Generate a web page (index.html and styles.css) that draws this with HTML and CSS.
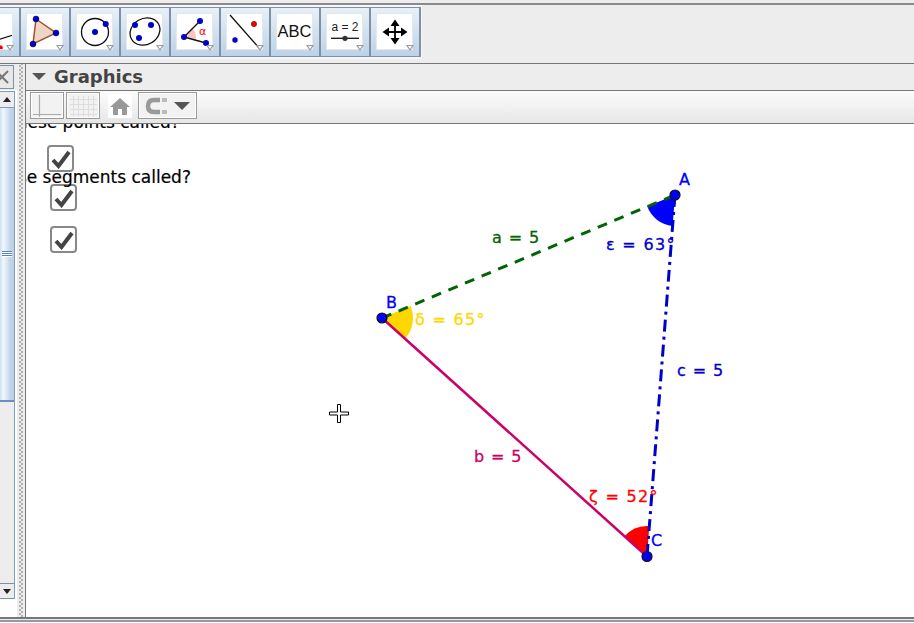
FILE: index.html
```html
<!DOCTYPE html>
<html lang="en">
<head>
<meta charset="utf-8">
<title>Graphics</title>
<link rel="stylesheet" href="styles.css">
</head>
<body>
<header class="topband">
  <div class="toolbar">
    <button class="tool"><span class="face"><svg width="35" height="35" viewBox="0 0 35 35"><path d="M20 26 L36 21" class="ln"/><circle cx="23" cy="34" r="2.800" fill="#f00"/></svg></span><i class="tri"></i></button>
    <button class="tool"><span class="face"><svg width="35" height="35" viewBox="0 0 35 35"><path d="M9 5 L29 19 L6 30Z" fill="#ecd6c8" stroke="#a5502a" stroke-width="1.500"/><circle cx="9" cy="5" r="3" fill="#00c" stroke="#112" stroke-width=".5"/><circle cx="29" cy="19" r="3" fill="#00c" stroke="#112" stroke-width=".5"/><circle cx="6" cy="30" r="3" fill="#00c" stroke="#112" stroke-width=".5"/></svg></span><i class="tri"></i></button>
    <button class="tool"><span class="face"><svg width="35" height="35" viewBox="0 0 35 35"><circle cx="18" cy="18" r="13.500" class="ln"/><circle cx="18" cy="18" r="3" fill="#00c"/><circle cx="28.700" cy="10" r="3" fill="#00c"/></svg></span><i class="tri"></i></button>
    <button class="tool"><span class="face"><svg width="35" height="35" viewBox="0 0 35 35"><ellipse cx="18" cy="17.500" rx="15.500" ry="13" transform="rotate(-30 18 17.500)" class="ln"/><circle cx="8" cy="11" r="3" fill="#00c"/><circle cx="24" cy="11" r="3" fill="#00c"/><circle cx="12" cy="24" r="3" fill="#00c"/></svg></span><i class="tri"></i></button>
    <button class="tool"><span class="face"><svg width="35" height="35" viewBox="0 0 35 35"><path d="M7 23 L15 14 A12 12 0 0 1 18.500 26 Z" fill="#fbc4c4"/><path d="M7 23 L23 7 M7 23 L29 29" class="ln"/><circle cx="7" cy="23" r="3" fill="#00c"/><circle cx="23" cy="7" r="3" fill="#00c"/><circle cx="29" cy="29" r="3" fill="#00c"/><text x="22" y="21" class="alpha">α</text></svg></span><i class="tri"></i></button>
    <button class="tool"><span class="face"><svg width="35" height="35" viewBox="0 0 35 35"><path d="M3 1 L33 35" class="ln"/><circle cx="27" cy="10" r="2.700" fill="#e00" stroke="#300" stroke-width=".4"/><circle cx="8" cy="26" r="2.700" fill="#00c"/></svg></span><i class="tri"></i></button>
    <button class="tool"><span class="face face-text">ABC</span><i class="tri"></i></button>
    <button class="tool"><span class="face"><svg width="35" height="35" viewBox="0 0 35 35"><text x="18" y="16.700" class="eq">a = 2</text><path d="M4 24.300 H32" class="ln"/><circle cx="18" cy="24.300" r="2.600" fill="#333"/></svg></span><i class="tri"></i></button>
    <button class="tool"><span class="face"><svg width="35" height="35" viewBox="0 0 35 35"><path d="M18 8 V28 M8 18 H28" stroke="#000" stroke-width="1.800"/><path d="M18 5.500 L22.500 12 H13.500Z M18 30.500 L22.500 24 H13.500Z M5.500 18 L12 13.500 V22.500Z M30.500 18 L24 13.500 V22.500Z" fill="#000"/></svg></span><i class="tri"></i></button>
  </div>
</header>
<div class="workspace">
  <aside class="sidepanel">
    <div class="side-head"><button class="close-btn"><svg class="close-x" width="14" height="14" viewBox="0 0 14 14"><path d="M1 1 L13 13 M13 1 L1 13" stroke="#777" stroke-width="2"/></svg></button></div>
    <div class="scrollbar">
      <button class="scroll-btn"><i class="up"></i></button>
      <div class="scroll-track">
        <div class="thumb"><span class="grip"></span></div>
      </div>
      <button class="scroll-btn scroll-btn-end"><i class="down"></i></button>
    </div>
  </aside>
  <div class="divider"></div>
  <main class="view">
    <div class="view-title"><i class="title-arrow"></i><span>Graphics</span></div>
    <div class="stylebar">
      <button class="style-btn sb-square"><svg width="30" height="24" viewBox="0 0 30 24"><path d="M7.500 1 V23 M1 20.500 H29" stroke="#aaa" stroke-width="1.200" fill="none"/></svg></button>
      <button class="style-btn sb-square"><svg width="30" height="24" viewBox="0 0 30 24"><path d="M5.500 2V23M10.500 2V23M15.500 2V23M20.500 2V23M25.500 2V23M2 5.500H29M2 10.500H29M2 15.500H29M2 20.500H29" stroke="#ddd" stroke-width="1" fill="none"/></svg></button>
      <button class="home"><svg width="20" height="20" viewBox="0 0 20 20"><path d="M10 2 L20 11 H17 V19 H12 V13 H8 V19 H3 V11 H0Z" fill="#999"/></svg></button>
      <button class="style-btn sb-magnet"><svg width="26" height="20" viewBox="0 0 26 20"><path d="M16 4 H10 Q4 4 4 10 Q4 16 10 16 H16" fill="none" stroke="#999" stroke-width="4.500"/><rect x="18" y="2" width="5" height="4" fill="#bbb"/><rect x="18" y="14" width="5" height="4" fill="#bbb"/></svg><i class="down-gray"></i></button>
    </div>
    <div class="canvas">
      <span class="check c1"><svg viewBox="0 0 20 20" width="20" height="20"><path d="M2 11 L7.500 17 L18 3" class="tick"/></svg></span>
      <span class="check c2"><svg viewBox="0 0 20 20" width="20" height="20"><path d="M2 11 L7.500 17 L18 3" class="tick"/></svg></span>
      <span class="check c3"><svg viewBox="0 0 20 20" width="20" height="20"><path d="M2 11 L7.500 17 L18 3" class="tick"/></svg></span>
      <span class="q q1">these points called?</span>
      <span class="q q2">these segments called?</span>
      <svg class="figure" width="888" height="493" viewBox="26 124 888 493">
        <path d="M675 195 L647.300 206.600 A30 30 0 0 0 672.600 225.900 Z" fill="#0000ff"/>
        <path d="M382 318 L410.600 306 A31 31 0 0 1 405 338.700 Z" fill="#ffd700"/>
        <path d="M647 556.500 L624.700 536 A30 30 0 0 1 649.300 526 Z" fill="#ff0000"/>
        <path d="M382 318 L675 195" stroke="#006400" stroke-width="3" stroke-dasharray="10 8" fill="none"/>
        <path d="M382 318 L647 556.500" stroke="#cc0066" stroke-width="2.500" fill="none"/>
        <path d="M675 195 L647 556.500" stroke="#0000cc" stroke-width="3" stroke-dasharray="12 5 3 5" fill="none"/>
        <circle cx="675" cy="195" r="5" fill="#0000ff" stroke="#111" stroke-width="1.200"/>
        <circle cx="382" cy="318" r="5" fill="#0000ff" stroke="#111" stroke-width="1.200"/>
        <circle cx="647" cy="556.500" r="5" fill="#0000ff" stroke="#111" stroke-width="1.200"/>
        <text x="679" y="185" class="lb blue">A</text>
        <text x="386" y="308" class="lb blue">B</text>
        <text x="651" y="546" class="lb blue">C</text>
        <text x="492" y="243" class="lb green">a = 5</text>
        <text x="474" y="462" class="lb pink">b = 5</text>
        <text x="677" y="376" class="lb navy">c = 5</text>
        <text x="415" y="325" class="lb angle gold">δ = 65°</text>
        <text x="606" y="250" class="lb angle navy">ε = 63°</text>
        <text x="589" y="502" class="lb angle red">ζ = 52°</text>
        <path d="M337.500 404.500 h3 v7.500 h8 v3 h-8 v7.500 h-3 v-7.500 h-8 v-3 h8 Z" fill="#fff" stroke="#000" stroke-width="1"/>
      </svg>
    </div>
  </main>
</div>
<footer class="bottomband"></footer>
</body>
</html>
```
FILE: styles.css
```css
* { box-sizing: border-box; }
html, body { margin: 0; padding: 0; }
body { width: 914px; height: 623px; overflow: hidden; background: #ededed; display: flex; flex-direction: column; font-family: "DejaVu Sans", sans-serif; }
button { padding: 0; margin: 0; font: inherit; }

.topband { height: 64px; flex: none; background: linear-gradient(#ededed 3px, #8a8a8a 3px, #8a8a8a 5px, #ededed 5px); border-bottom: 1px solid #777; padding-top: 5px; overflow: hidden; }
.toolbar { display: flex; width: 451px; height: 54px; margin-left: -29px; background: #f7f7f7; padding-top: 2px; }
.tool { position: relative; flex: none; width: 50px; height: 50px; border: solid #7d90a6; border-width: 1px 2px 1px 0; background: linear-gradient(#e8f0f7, #bcd2e8); display: flex; align-items: flex-start; justify-content: flex-start; padding: 6px 0 0 6px; }
.face { width: 35px; height: 35px; background: #fff; box-shadow: 0 0 0 1px #e2e8ee; display: block; overflow: hidden; }
.face svg { display: block; }
.face-text { font: 16.500px/35px "Liberation Sans", sans-serif; color: #111; text-align: center; }
.tri { position: absolute; right: 5px; bottom: 5px; width: 0; height: 0; border-left: 4px solid transparent; border-right: 4px solid transparent; border-top: 6px solid #999; }
.tri::after { content: ""; position: absolute; left: -2px; top: -5px; width: 0; height: 0; border-left: 2px solid transparent; border-right: 2px solid transparent; border-top: 3px solid #fff; }
.ln { fill: none; stroke: #111; stroke-width: 1.300; }
.alpha { font: 11px "DejaVu Sans", sans-serif; fill: #f00; }
.eq { font: 12px "Liberation Sans", sans-serif; fill: #222; text-anchor: middle; }

.workspace { flex: 1; display: flex; min-height: 0; }
.sidepanel { width: 17px; flex: none; display: flex; flex-direction: column; background: #fff; }
.side-head { height: 26px; flex: none; padding-top: 1px; background: #ededed; }
.close-btn { width: 14px; height: 24px; display: flex; align-items: center; justify-content: flex-start; background: #e8e8e8; border: 1px solid #7d90a6; border-left: 0; overflow: hidden; }
.close-x { flex: none; margin-left: -5px; }
.scrollbar { flex: 1; display: flex; flex-direction: column; min-height: 0; margin: 1px 2px 18px 0; border-right: 1px solid #7d9cc0; }
.scroll-btn { flex: none; height: 16px; background: #ededed; border: 0; border-top: 1px solid #7d9cc0; display: flex; align-items: center; justify-content: center; }
.scroll-btn-end { border-top: 1px solid #7d90a6; border-bottom: 1px solid #7d90a6; }
.up { width: 0; height: 0; border: 4px solid transparent; border-top: 0; border-bottom: 5px solid #222; }
.down { width: 0; height: 0; border: 4px solid transparent; border-bottom: 0; border-top: 5px solid #222; }
.scroll-track { flex: 1; background: #ededed; min-height: 0; }
.thumb { height: 295px; background: linear-gradient(90deg, #cfe0f0, #f2f7fc 25%, #c0d4ea 75%, #bcd0e8); border-top: 1px solid #7d9cc0; border-bottom: 2px solid #6a8fc0; display: flex; align-items: center; justify-content: center; }
.grip { width: 10px; height: 6px; background: linear-gradient(#5a80c0 1px, #fff 1px, #fff 2px, #5a80c0 2px, #5a80c0 3px, #fff 3px, #fff 4px, #5a80c0 4px, #5a80c0 5px, #fff 5px); }
.divider { width: 9px; flex: none; background-color: #ededed; background-image: radial-gradient(circle, #8c8c8c .6px, transparent .9px), radial-gradient(circle, #8c8c8c .6px, transparent .9px); background-size: 4px 4px, 4px 4px; background-position: 1px 0, 3px 2px; background-repeat: repeat-y, repeat-y; border-right: 1px solid #777; }

.view { flex: 1; display: flex; flex-direction: column; min-width: 0; }
.view-title { height: 26px; flex: none; display: flex; align-items: center; gap: 8px; padding: 0 0 2px 6px; background: #ededed; font-weight: 700; font-size: 18px; color: #444; }
.title-arrow { width: 0; height: 0; border-left: 7px solid transparent; border-right: 7px solid transparent; border-top: 7px solid #555; }
.stylebar { height: 34px; flex: none; display: flex; align-items: flex-start; gap: 2px; padding: 1px 0 0 4px; background: linear-gradient(#fcfcfc, #e6e6e6); border-top: 1px solid #777; border-bottom: 1px solid #777; }
.style-btn { height: 27px; border: 1px solid #999; background: #f2f2f2; display: flex; align-items: center; box-shadow: inset 0 0 0 1px #fff; overflow: hidden; }
.sb-square { width: 34px; justify-content: center; }
.home { width: 24px; height: 24px; border: 0; background: #fff; display: flex; align-items: center; justify-content: center; margin: 2px 4px 0 6px; }
.sb-magnet { width: 59px; gap: 4px; padding-left: 5px; }
.down-gray { flex: none; width: 0; height: 0; border-left: 8px solid transparent; border-right: 8px solid transparent; border-top: 8px solid #555; }

.canvas { position: relative; flex: 1; background: #fff; overflow: hidden; min-height: 0; }
.q { position: absolute; font: 17px/20px "DejaVu Sans", sans-serif; color: #000; white-space: nowrap; -webkit-text-stroke: .2px #000; }
.q1 { left: -16px; top: -12px; }
.q2 { left: -36px; top: 43px; }
.check { position: absolute; width: 27px; height: 27px; display: flex; align-items: center; justify-content: center; background: #fff; border: 2px solid #888; border-radius: 4px; }
.c1 { left: 21px; top: 21px; }
.c2 { left: 24px; top: 60px; }
.c3 { left: 24px; top: 102px; }
.tick { fill: none; stroke: #444; stroke-width: 4; }
.figure { position: absolute; left: 0; top: 0; }
.lb { font: 16px "DejaVu Sans", sans-serif; letter-spacing: .9px; stroke-width: .3px; }
.angle { letter-spacing: 1.300px; }
.blue { fill: #0000ff; stroke: #0000ff; }
.green { fill: #006400; stroke: #006400; }
.pink { fill: #cc0066; stroke: #cc0066; }
.navy { fill: #0000cc; stroke: #0000cc; }
.gold { fill: #ffd700; stroke: #ffd700; }
.red { fill: #f00; stroke: #f00; }

.bottomband { height: 6px; flex: none; background: linear-gradient(#777 2px, #ededed 2px, #ededed 3px, #8a9bb0 3px, #8a9bb0 5px, #fff 5px); }
```
